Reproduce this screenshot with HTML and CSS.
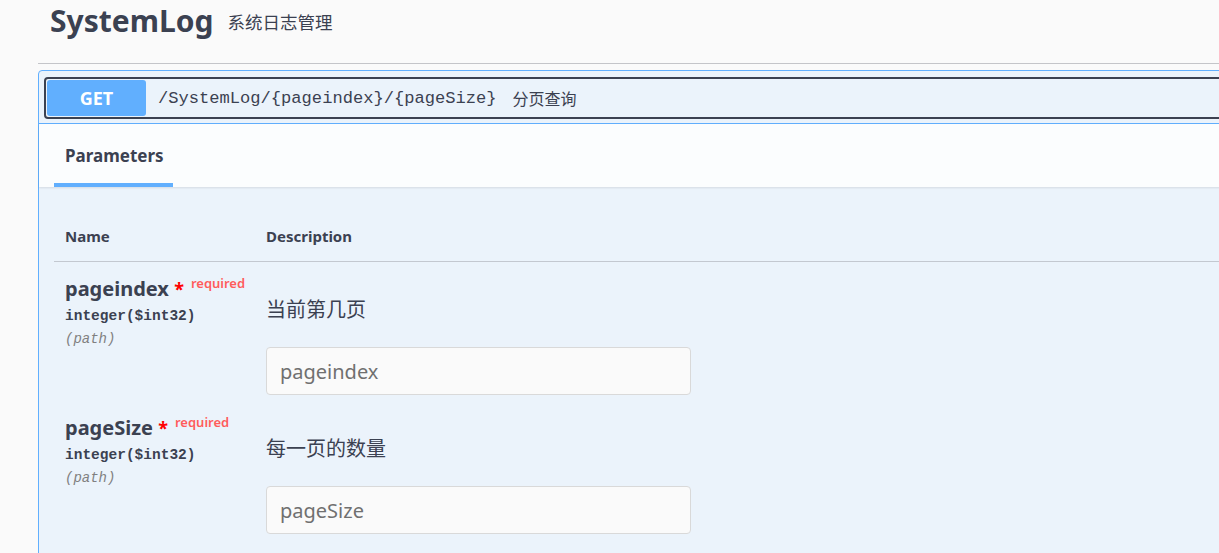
FILE: index.html
```html
<!DOCTYPE html>
<html lang="zh-CN">
<head>
    <meta charset="UTF-8">
    <meta name="viewport" content="width=device-width, initial-scale=1.0">
    <title>SystemLog</title>
    <link rel="stylesheet" href="styles.css">
</head>
<body>

    <!-- Tag Section -->
    <section class="tag-section">
        <h3 class="tag-title">
            <span class="tag-name">SystemLog</span>
            <small class="tag-desc">系统日志管理</small>
        </h3>

        <!-- Operation Block -->
        <div class="opblock">
            <div class="opblock-summary">
                <div class="summary-box">
                    <span class="method">GET</span>
                    <span class="path">/SystemLog/{pageindex}/{pageSize}</span>
                    <span class="summary-text">分页查询</span>
                </div>
            </div>

            <div class="section-header">
                <div class="tab">Parameters</div>
            </div>

            <div class="params">
                <div class="param-head">
                    <div class="col-name">Name</div>
                    <div class="col-desc">Description</div>
                </div>

                <div class="param-row">
                    <div class="col-name">
                        <div class="param-name">pageindex <span class="star">*</span><sup class="required">required</sup></div>
                        <div class="param-type">integer($int32)</div>
                        <div class="param-in">(path)</div>
                    </div>
                    <div class="col-desc">
                        <p class="param-text">当前第几页</p>
                        <input type="text" class="param-input" placeholder="pageindex">
                    </div>
                </div>

                <div class="param-row">
                    <div class="col-name">
                        <div class="param-name">pageSize <span class="star">*</span><sup class="required">required</sup></div>
                        <div class="param-type">integer($int32)</div>
                        <div class="param-in">(path)</div>
                    </div>
                    <div class="col-desc">
                        <p class="param-text">每一页的数量</p>
                        <input type="text" class="param-input" placeholder="pageSize">
                    </div>
                </div>
            </div>
        </div>
    </section>

</body>
</html>
```

FILE: styles.css
```css
body {
    font-family: "Noto Sans", "Noto Sans CJK SC", sans-serif;
    background-color: #fafafa;
    color: #3b4151;
    margin: 0;
    padding: 0;
    overflow: hidden;
}

.tag-section {
    padding-left: 38px;
    margin-right: -20px;
}

.tag-title {
    display: flex;
    align-items: center;
    margin: 0;
    padding: 0 0 21px 12px;
    height: 64px;
    border-bottom: 1px solid #c4c5c9;
    box-sizing: border-box;
}

.tag-name {
    font-size: 30px;
    font-weight: 700;
    line-height: 40px;
}

.tag-desc {
    font-size: 17.5px;
    font-weight: 400;
    margin-left: 14px;
}

.opblock {
    margin-top: 6px;
    border: 1px solid #61affe;
    border-radius: 4px;
    background-color: #ebf3fb;
    padding-bottom: 40px;
}

.opblock-summary {
    padding: 6px 0 4px 5px;
    border-bottom: 1px solid #61affe;
}

.summary-box {
    display: flex;
    align-items: center;
    height: 42px;
    border: 2px solid #3b4151;
    border-radius: 4px;
    box-sizing: border-box;
    padding-left: 1px;
}

.method {
    width: 99px;
    height: 36px;
    line-height: 36px;
    background-color: #61affe;
    color: white;
    font-size: 18px;
    font-weight: 700;
    text-align: center;
    border-radius: 3px;
}

.path {
    font-family: "Liberation Mono", monospace;
    font-size: 17.1px;
    margin-left: 12px;
}

.summary-text {
    font-size: 16px;
    margin-left: 16px;
}

.section-header {
    height: 63px;
    padding-left: 15px;
    background-color: rgba(255, 255, 255, 0.8);
    box-shadow: 0 1px 2px rgba(0, 0, 0, 0.1);
    display: flex;
    align-items: flex-end;
}

.tab {
    font-size: 17px;
    font-weight: 700;
    padding: 0 11px 16px;
    width: 97px;
    border-bottom: 4px solid #61affe;
}

.params {
    padding: 39px 0 0 15px;
}

.param-head {
    display: flex;
    font-size: 15px;
    font-weight: 700;
    padding-bottom: 15px;
    border-bottom: 1px solid #c3c8d0;
}

.col-name {
    width: 201px;
    padding-left: 11px;
}

.col-desc {
    flex: 1;
}

.param-row {
    display: flex;
    padding-top: 12px;
}

.param-row + .param-row {
    padding-top: 18px;
}

.param-name {
    font-size: 20px;
    font-weight: 700;
}

.star {
    color: red;
    font-size: 18px;
}

.required {
    color: #ff5c5c;
    font-size: 13px;
    font-weight: 600;
    margin-left: 7px;
}

.param-type {
    font-family: "Liberation Mono", monospace;
    font-size: 14.5px;
    font-weight: 700;
    margin-top: 6px;
}

.param-in {
    font-family: "Liberation Mono", monospace;
    font-size: 14px;
    font-style: italic;
    color: #808080;
    margin-top: 7px;
}

.param-text {
    font-size: 20px;
    margin: 20px 0 24px;
}

.param-input {
    display: block;
    width: 425px;
    height: 48px;
    box-sizing: border-box;
    padding: 0 13px;
    font-family: "Noto Sans", sans-serif;
    font-size: 20px;
    color: #3b4151;
    background-color: #fafafa;
    border: 1px solid #d9d9d9;
    border-radius: 4px;
}

.param-input::placeholder {
    color: #707070;
}
```
